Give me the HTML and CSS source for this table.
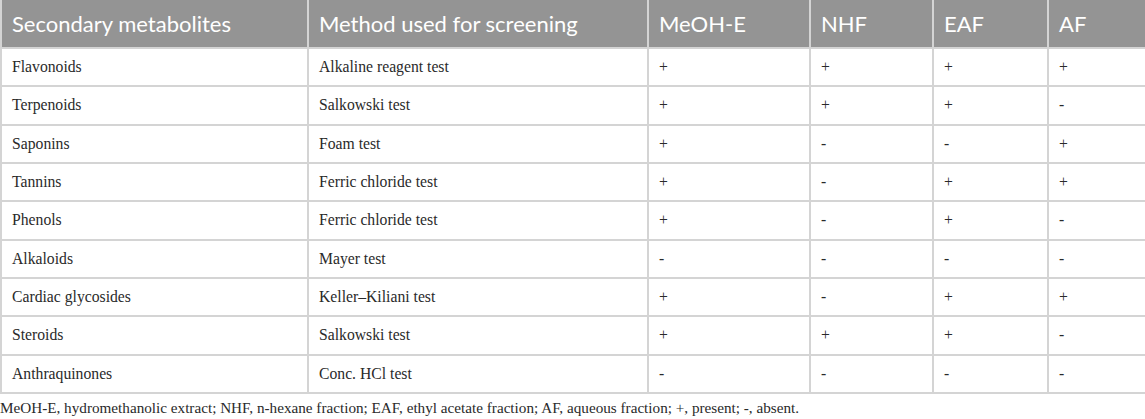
FILE: index.html
```html
<!DOCTYPE html>
<html>
<head>
<meta charset="utf-8">
<link rel="stylesheet" href="styles.css">
</head>
<body>
<table class="data">
  <colgroup>
    <col class="c1"><col class="c2"><col class="c3"><col class="c4"><col class="c5"><col class="c6">
  </colgroup>
  <thead>
    <tr><th>Secondary metabolites</th><th>Method used for screening</th><th>MeOH-E</th><th>NHF</th><th>EAF</th><th>AF</th></tr>
  </thead>
  <tbody>
    <tr><td>Flavonoids</td><td>Alkaline reagent test</td><td>+</td><td>+</td><td>+</td><td>+</td></tr>
    <tr><td>Terpenoids</td><td>Salkowski test</td><td>+</td><td>+</td><td>+</td><td>-</td></tr>
    <tr><td>Saponins</td><td>Foam test</td><td>+</td><td>-</td><td>-</td><td>+</td></tr>
    <tr><td>Tannins</td><td>Ferric chloride test</td><td>+</td><td>-</td><td>+</td><td>+</td></tr>
    <tr><td>Phenols</td><td>Ferric chloride test</td><td>+</td><td>-</td><td>+</td><td>-</td></tr>
    <tr><td>Alkaloids</td><td>Mayer test</td><td>-</td><td>-</td><td>-</td><td>-</td></tr>
    <tr><td>Cardiac glycosides</td><td>Keller–Kiliani test</td><td>+</td><td>-</td><td>+</td><td>+</td></tr>
    <tr><td>Steroids</td><td>Salkowski test</td><td>+</td><td>+</td><td>+</td><td>-</td></tr>
    <tr><td>Anthraquinones</td><td>Conc. HCl test</td><td>-</td><td>-</td><td>-</td><td>-</td></tr>
  </tbody>
</table>
<p class="note">MeOH-E, hydromethanolic extract; NHF, n-hexane fraction; EAF, ethyl acetate fraction; AF, aqueous fraction; +, present; -, absent.</p>
</body>
</html>
```
FILE: styles.css
```css
html, body {
  margin: 0;
  padding: 0;
  background: #ffffff;
}
.data {
  width: 1145px;
  border-collapse: collapse;
  table-layout: fixed;
}
.c1 { width: 307px; }
.c2 { width: 340px; }
.c3 { width: 162px; }
.c4 { width: 123px; }
.c5 { width: 115px; }
.c6 { width: 98px; }
.data th {
  background: #949494;
  color: #ffffff;
  font-family: Lato, "Open Sans", sans-serif;
  font-weight: 400;
  font-size: 22px;
  text-align: left;
  height: 47px;
  padding: 0 0 0 10px;
  border: 2px solid #d4d4d4;
  border-top: none;
  border-bottom: none;
}
.data td {
  font-family: "Liberation Serif", serif;
  font-size: 15.7px;
  color: #2a2a2a;
  height: 36.33px;
  padding: 0 0 0 10px;
  border: 2px solid #d4d4d4;
}
.note {
  margin: 5px 0 0 0;
  font-family: "Liberation Serif", serif;
  font-size: 15.2px;
  color: #2a2a2a;
}
```
